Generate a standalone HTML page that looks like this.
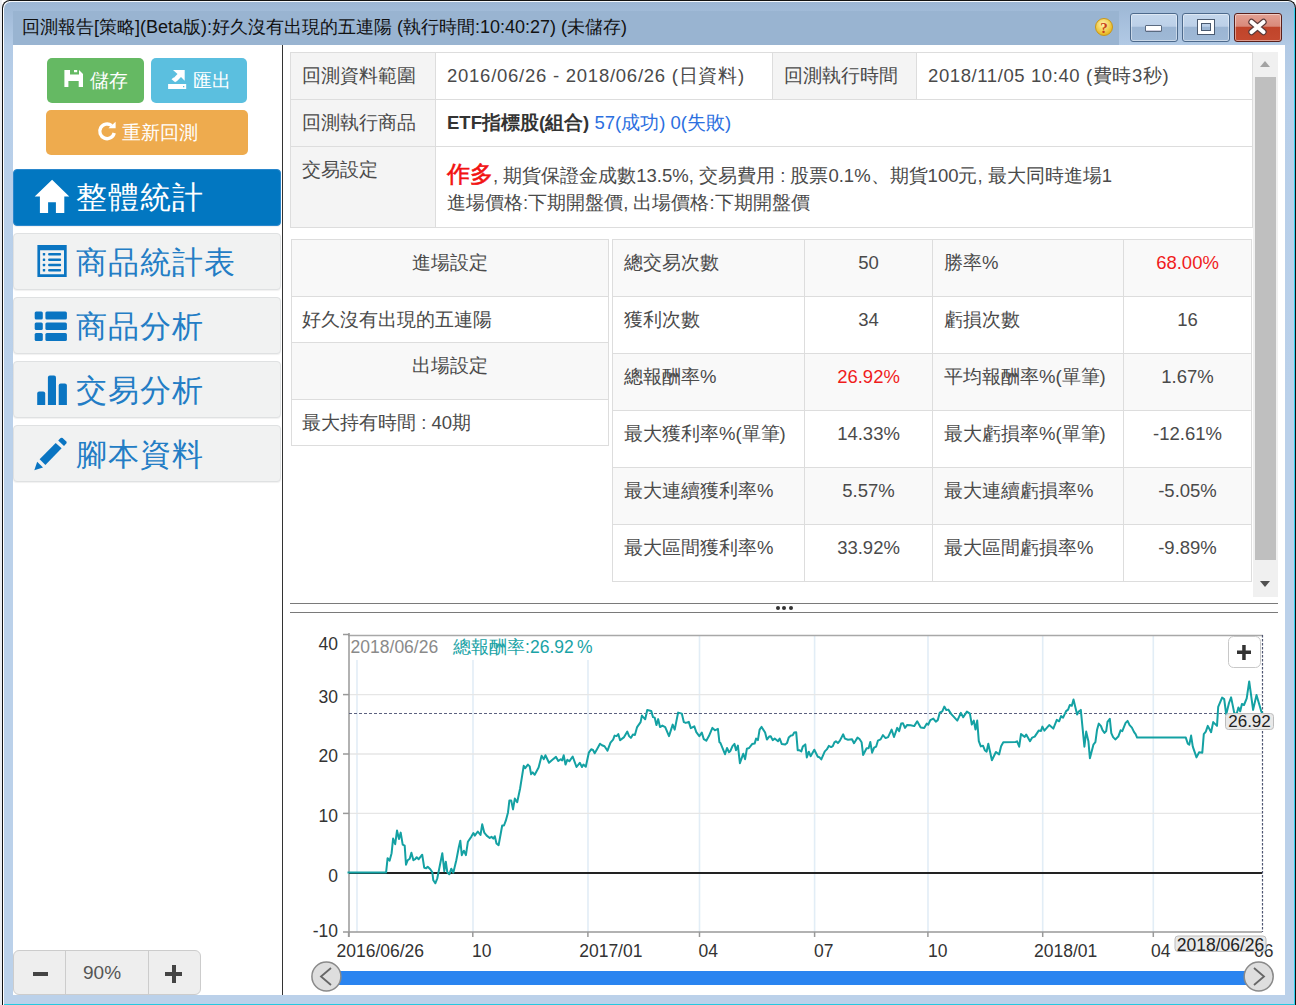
<!DOCTYPE html>
<html><head><meta charset="utf-8">
<style>
*{margin:0;padding:0;box-sizing:border-box}
html,body{width:1296px;height:1005px;overflow:hidden;background:#fff;font-family:"Liberation Sans",sans-serif;color:#333}
.a{position:absolute}
#frame{left:2px;top:0;width:1294px;height:1005px;background:linear-gradient(#9cb6d4 0px,#a6bfdc 20px,#b2cae5 45px,#b8cfe9 90px,#bbd1ea 400px);border-radius:8px 8px 0 0;border:1px solid #111;border-bottom:none;box-shadow:inset 1px 1px 0 #f6f9fc}
#outline{left:2px;top:0;width:1294px;height:1005px;border:1px solid #222;border-bottom:none;border-radius:8px 8px 0 0}
#tband{left:13px;top:11px;width:1106px;height:34px;background:#99b4d1}
#title{left:22px;top:15px;font-size:18px;line-height:24px;color:#111;white-space:nowrap}
#content{left:13px;top:45px;width:1272px;height:950px;background:#fff}
.cbtn{top:13px;height:29px;border:1px solid #4d6a8c;border-radius:3px;background:linear-gradient(#c4d7ec 0,#bcd0e8 45%,#9bb5d3 50%,#9fb9d6 100%);box-shadow:inset 0 0 0 1px rgba(255,255,255,.45)}
#bclose{background:linear-gradient(#e3a194 0,#d98a7a 45%,#c0442a 50%,#c54a30 100%);border-color:#5a1f1a}
.btn{border-radius:5px;color:#fff;font-size:19px;line-height:45px;text-align:center;white-space:nowrap}
.nav{left:13px;width:268px;height:57px;border-radius:4px;background:#f1f2f2;border:1px solid #dfe1e2;box-shadow:0 1px 1px rgba(0,0,0,.06)}
.navt{font-size:31px;line-height:57px;color:#237dc5;white-space:nowrap;letter-spacing:1.1px}
.tx2{font-size:19px;line-height:27px;color:#fff;white-space:nowrap}
.nav svg{position:absolute}
.tx{font-size:18.5px;line-height:24px;color:#4a4a4a;white-space:nowrap}
</style></head><body>
<div class="a" style="left:0;top:0;width:2px;height:1005px;background:#eceef2"></div>
<div id="frame" class="a"></div>
<div class="a" style="left:2px;top:8px;width:1px;height:997px;background:#111"></div>
<div class="a" style="left:3px;top:8px;width:1px;height:997px;background:#fff"></div>
<div class="a" style="left:9px;top:0;width:1278px;height:1px;background:#111"></div>
<div class="a" style="left:9px;top:1px;width:1278px;height:1px;background:#f4f8fc"></div>
<div class="a" style="left:1295px;top:8px;width:1px;height:997px;background:#111"></div>
<div class="a" style="left:1294px;top:8px;width:1px;height:997px;background:#30d0ee"></div>
<div class="a" style="left:4px;top:1004px;width:1290px;height:1px;background:#25c9e0"></div>
<div id="tband" class="a"></div>
<div id="title" class="a">回測報告[策略](Beta版):好久沒有出現的五連陽 (執行時間:10:40:27) (未儲存)</div>
<!-- help icon -->
<svg class="a" style="left:1094px;top:17px" width="20" height="20" viewBox="0 0 20 20"><defs><radialGradient id="hg" cx="45%" cy="35%" r="65%"><stop offset="0" stop-color="#fff6b0"/><stop offset="1" stop-color="#e8b416"/></radialGradient></defs><circle cx="10" cy="10" r="8.5" fill="url(#hg)" stroke="#c8961a" stroke-width="1"/><text x="10" y="15.5" font-size="15" font-weight="bold" font-family="Liberation Serif" text-anchor="middle" fill="#c8401a">?</text></svg>
<div class="a cbtn" style="left:1130px;width:48px"></div>
<div class="a" style="left:1145px;top:25px;width:17px;height:7px;background:#fff;border:1px solid #5a6a80;border-radius:1px;box-shadow:inset 0 -1px 0 #ccd"></div>
<div class="a cbtn" style="left:1182px;width:48px"></div>
<div class="a" style="left:1198px;top:20px;width:16px;height:14px;border:3px solid #fff;outline:1px solid #4a5a70;box-shadow:inset 0 0 0 1px #4a5a70"></div>
<div class="a cbtn" id="bclose" style="left:1234px;width:48px"></div>
<svg class="a" style="left:1246px;top:17px" width="24" height="20" viewBox="0 0 24 20"><path d="M5.5 5 L17.5 15 M17.5 5 L5.5 15" stroke="#5a3a3a" stroke-width="6.4" stroke-linecap="round"/><path d="M5.5 5 L17.5 15 M17.5 5 L5.5 15" stroke="#fff" stroke-width="4.2" stroke-linecap="round"/></svg>

<div id="content" class="a"></div>
<!-- left panel divider -->
<div class="a" style="left:282px;top:45px;width:1px;height:950px;background:#333"></div>

<!-- buttons -->
<div class="a btn" style="left:47px;top:58px;width:97px;height:45px;background:#65b963"></div>
<div class="a btn" style="left:151px;top:58px;width:96px;height:45px;background:#5bbfdf"></div>
<div class="a btn" style="left:46px;top:110px;width:202px;height:45px;background:#eeab4e"></div>
<div class="a tx2" style="left:90px;top:67px">儲存</div>
<div class="a tx2" style="left:193px;top:67px">匯出</div>
<div class="a tx2" style="left:122px;top:119px">重新回測</div>
<svg class="a" style="left:0;top:0" width="283" height="500" viewBox="0 0 283 500">
<path d="M64.4 70 H79 L83 74 V87 H78.7 V81 H68.4 V87 H64.4 Z M70 70 V74.5 H79 V70 H77.2 V72.3 H74 V70 Z" fill="#fff" fill-rule="evenodd"/>
<path d="M173 70 H184.7 V80.8 L181 77 L176.6 81.6 L173.2 78.6 L177.5 74 Z" fill="#fff"/>
<path d="M171.5 79.2 L173.5 77.6 L177 80.6 L175.2 82.2 Z" fill="#fff"/>
<path d="M168.1 84 H186.2 V88.9 H168.1 Z M183 85.9 H184.3 V87.2 H183 Z" fill="#fff" fill-rule="evenodd"/>
<path d="M114.2 133 A7.3 7.3 0 1 1 111.6 125.6" fill="none" stroke="#fff" stroke-width="3.4"/>
<path d="M115.6 121.8 V128.3 H108.4 Z" fill="#fff"/>
</svg>

<!-- nav -->
<div class="a nav" style="top:169px;background:#0277c1;border-color:#2a87cc;height:57px"></div>
<div class="a navt" style="left:76px;top:169px;color:#fff">整體統計</div>
<div class="a nav" style="top:233px"></div>
<div class="a navt" style="left:76px;top:234px">商品統計表</div>
<div class="a nav" style="top:297px"></div>
<div class="a navt" style="left:76px;top:298px">商品分析</div>
<div class="a nav" style="top:361px"></div>
<div class="a navt" style="left:76px;top:362px">交易分析</div>
<div class="a nav" style="top:425px"></div>
<div class="a navt" style="left:76px;top:426px">腳本資料</div>
<svg class="a" style="left:0;top:0" width="283" height="500" viewBox="0 0 283 500">
<path d="M52.1 179.7 L69.3 196.6 H64.3 V213 H55.9 V202.3 H48.1 V213 H39.9 V196.6 H34.7 Z" fill="#fff"/>
<g fill="#0a75c2">
<path d="M37.4 244.9 H66.7 V276.9 H37.4 Z M40.1 250.2 V274.3 H64 V250.2 Z" fill-rule="evenodd"/>
<rect x="42.8" y="253" width="2.4" height="2.5" rx=".5"/><rect x="48.1" y="253" width="13" height="2.5" rx="1"/>
<rect x="42.8" y="258.4" width="2.4" height="2.5" rx=".5"/><rect x="48.1" y="258.4" width="13" height="2.5" rx="1"/>
<rect x="42.8" y="263.7" width="2.4" height="2.5" rx=".5"/><rect x="48.1" y="263.7" width="13" height="2.5" rx="1"/>
<rect x="42.8" y="269" width="2.4" height="2.5" rx=".5"/><rect x="48.1" y="269" width="13" height="2.5" rx="1"/>
<rect x="34.7" y="311.6" width="8.1" height="8" rx="1.5"/><rect x="45.4" y="311.6" width="21.5" height="8" rx="1.5"/>
<rect x="34.7" y="322.4" width="8.1" height="7.7" rx="1.5"/><rect x="45.4" y="322.4" width="21.5" height="7.7" rx="1.5"/>
<rect x="34.7" y="333" width="8.1" height="8" rx="1.5"/><rect x="45.4" y="333" width="21.5" height="8" rx="1.5"/>
<path d="M37.2 404.9 V393.5 Q37.2 391.5 39.2 391.5 H43.2 Q45.2 391.5 45.2 393.5 V404.9 Z"/>
<path d="M47.9 404.9 V377.6 Q47.9 375.6 49.9 375.6 H54 Q56 375.6 56 377.6 V404.9 Z"/>
<path d="M58.7 404.9 V385.4 Q58.7 383.4 60.7 383.4 H64.9 Q66.9 383.4 66.9 385.4 V404.9 Z"/>
<path d="M34.3 470.3 L37.2 461.8 L43 467.6 Z"/>
<path d="M39.6 459.3 L55.7 443 L61.6 448.3 L45.4 464.9 Z"/>
<path d="M58.2 440.5 L60.6 438.1 Q61.6 437.3 62.6 438.1 L66.3 441.5 Q67.1 442.5 66.3 443.4 L64 445.9 Z"/>
</g>
</svg>

<!-- zoom control -->
<div class="a" style="left:13px;top:950px;width:188px;height:45px;background:#eee;border:1px solid #ccc;border-radius:6px"></div>
<div class="a" style="left:65px;top:951px;width:1px;height:44px;background:#ccc"></div>
<div class="a" style="left:148px;top:951px;width:1px;height:44px;background:#ccc"></div>
<div class="a" style="left:33px;top:972px;width:15px;height:4px;background:#444"></div>
<div class="a" style="left:83px;top:951px;line-height:44px;font-size:19px;color:#555">90%</div>
<div class="a" style="left:165px;top:972px;width:17px;height:4px;background:#444"></div>
<div class="a" style="left:172px;top:965px;width:4px;height:18px;background:#444"></div>

<!-- top table -->
<div class="a" style="left:290px;top:52px;width:963px;height:176px;border:1px solid #ddd;background:#fff"></div>
<div class="a" style="left:291px;top:53px;width:144px;height:174px;background:#f4f4f4"></div>
<div class="a" style="left:773px;top:53px;width:143px;height:46px;background:#f4f4f4"></div>
<div class="a" style="left:291px;top:99px;width:961px;height:1px;background:#ddd"></div>
<div class="a" style="left:291px;top:146px;width:961px;height:1px;background:#ddd"></div>
<div class="a" style="left:435px;top:53px;width:1px;height:174px;background:#ddd"></div>
<div class="a" style="left:772px;top:53px;width:1px;height:46px;background:#ddd"></div>
<div class="a" style="left:916px;top:53px;width:1px;height:46px;background:#ddd"></div>
<div class="a tx" style="left:302px;top:64px">回測資料範圍</div>
<div class="a tx" style="left:447px;top:64px;letter-spacing:.75px">2016/06/26 - 2018/06/26 (日資料)</div>
<div class="a tx" style="left:784px;top:64px">回測執行時間</div>
<div class="a tx" style="left:928px;top:64px;letter-spacing:.6px">2018/11/05 10:40 (費時3秒)</div>
<div class="a tx" style="left:302px;top:111px">回測執行商品</div>
<div class="a tx" style="left:447px;top:111px"><b style="color:#333">ETF指標股(組合)</b> <span style="color:#2b6fe0">57(成功) 0(失敗)</span></div>
<div class="a tx" style="left:302px;top:158px">交易設定</div>
<div class="a tx" style="left:447px;top:163px;white-space:nowrap"><b style="color:#f21212;font-size:22.5px;font-weight:normal;-webkit-text-stroke:0.6px #f21212">作多</b>, 期貨保證金成數13.5%, 交易費用 : 股票0.1%、期貨100元, 最大同時進場1</div>
<div class="a tx" style="left:447px;top:191px">進場價格:下期開盤價, 出場價格:下期開盤價</div>

<!-- entry/exit table -->
<div class="a" style="left:291px;top:239px;width:318px;height:207px;border:1px solid #ddd;background:#fff"></div>
<div class="a" style="left:292px;top:240px;width:316px;height:56px;background:#f8f8f8"></div>
<div class="a" style="left:292px;top:343px;width:316px;height:56px;background:#f8f8f8"></div>
<div class="a" style="left:292px;top:296px;width:316px;height:1px;background:#ddd"></div>
<div class="a" style="left:292px;top:342px;width:316px;height:1px;background:#ddd"></div>
<div class="a" style="left:292px;top:399px;width:316px;height:1px;background:#ddd"></div>
<div class="a tx" style="left:292px;top:251px;width:316px;text-align:center">進場設定</div>
<div class="a tx" style="left:302px;top:308px">好久沒有出現的五連陽</div>
<div class="a tx" style="left:292px;top:354px;width:316px;text-align:center">出場設定</div>
<div class="a tx" style="left:302px;top:411px">最大持有時間 : 40期</div>

<!-- stats table -->
<div class="a" style="left:612px;top:239px;width:640px;height:343px;border:1px solid #ddd;background:#fff"></div>
<div class="a" style="left:613px;top:240px;width:638px;height:56px;background:#f9f9f9"></div>
<div class="a" style="left:613px;top:354px;width:638px;height:56px;background:#f9f9f9"></div>
<div class="a" style="left:613px;top:468px;width:638px;height:56px;background:#f9f9f9"></div>
<div class="a" style="left:613px;top:296px;width:638px;height:1px;background:#ddd"></div>
<div class="a" style="left:613px;top:353px;width:638px;height:1px;background:#ddd"></div>
<div class="a" style="left:613px;top:410px;width:638px;height:1px;background:#ddd"></div>
<div class="a" style="left:613px;top:467px;width:638px;height:1px;background:#ddd"></div>
<div class="a" style="left:613px;top:524px;width:638px;height:1px;background:#ddd"></div>
<div class="a" style="left:804px;top:240px;width:1px;height:341px;background:#ddd"></div>
<div class="a" style="left:932px;top:240px;width:1px;height:341px;background:#ddd"></div>
<div class="a" style="left:1123px;top:240px;width:1px;height:341px;background:#ddd"></div>
<div class="a tx" style="left:624px;top:251px">總交易次數</div>
<div class="a tx" style="left:805px;top:251px;width:127px;text-align:center">50</div>
<div class="a tx" style="left:944px;top:251px">勝率%</div>
<div class="a tx" style="left:1124px;top:251px;width:127px;text-align:center;color:#f01c1c">68.00%</div>
<div class="a tx" style="left:624px;top:308px">獲利次數</div>
<div class="a tx" style="left:805px;top:308px;width:127px;text-align:center">34</div>
<div class="a tx" style="left:944px;top:308px">虧損次數</div>
<div class="a tx" style="left:1124px;top:308px;width:127px;text-align:center">16</div>
<div class="a tx" style="left:624px;top:365px">總報酬率%</div>
<div class="a tx" style="left:805px;top:365px;width:127px;text-align:center;color:#f01c1c">26.92%</div>
<div class="a tx" style="left:944px;top:365px">平均報酬率%(單筆)</div>
<div class="a tx" style="left:1124px;top:365px;width:127px;text-align:center">1.67%</div>
<div class="a tx" style="left:624px;top:422px">最大獲利率%(單筆)</div>
<div class="a tx" style="left:805px;top:422px;width:127px;text-align:center">14.33%</div>
<div class="a tx" style="left:944px;top:422px">最大虧損率%(單筆)</div>
<div class="a tx" style="left:1124px;top:422px;width:127px;text-align:center">-12.61%</div>
<div class="a tx" style="left:624px;top:479px">最大連續獲利率%</div>
<div class="a tx" style="left:805px;top:479px;width:127px;text-align:center">5.57%</div>
<div class="a tx" style="left:944px;top:479px">最大連續虧損率%</div>
<div class="a tx" style="left:1124px;top:479px;width:127px;text-align:center">-5.05%</div>
<div class="a tx" style="left:624px;top:536px">最大區間獲利率%</div>
<div class="a tx" style="left:805px;top:536px;width:127px;text-align:center">33.92%</div>
<div class="a tx" style="left:944px;top:536px">最大區間虧損率%</div>
<div class="a tx" style="left:1124px;top:536px;width:127px;text-align:center">-9.89%</div>

<!-- scrollbar -->
<div class="a" style="left:1253px;top:52px;width:25px;height:545px;background:#f0f0f0"></div>
<div class="a" style="left:1255px;top:77px;width:21px;height:483px;background:#bfbfbf"></div>
<div class="a" style="left:1260px;top:61px;width:0;height:0;border-left:5.5px solid transparent;border-right:5.5px solid transparent;border-bottom:6px solid #a3a3a3"></div>
<div class="a" style="left:1260px;top:581px;width:0;height:0;border-left:5.5px solid transparent;border-right:5.5px solid transparent;border-top:6px solid #505050"></div>

<!-- splitter -->
<div class="a" style="left:290px;top:603px;width:988px;height:1px;background:#7a7a7a"></div>
<div class="a" style="left:290px;top:612px;width:988px;height:1px;background:#7a7a7a"></div>
<div class="a" style="left:776px;top:606px;width:4px;height:4px;border-radius:50%;background:#333"></div>
<div class="a" style="left:782px;top:606px;width:4px;height:4px;border-radius:50%;background:#333"></div>
<div class="a" style="left:789px;top:606px;width:4px;height:4px;border-radius:50%;background:#333"></div>

<!--CHARTSTART--><svg class="a" style="left:0;top:0" width="1296" height="1005" viewBox="0 0 1296 1005">
<line x1="357" y1="635" x2="357" y2="932" stroke="#e2edf6" stroke-width="1.6"/>
<line x1="473" y1="635" x2="473" y2="932" stroke="#e2edf6" stroke-width="1.6"/>
<line x1="588" y1="635" x2="588" y2="932" stroke="#e2edf6" stroke-width="1.6"/>
<line x1="699.5" y1="635" x2="699.5" y2="932" stroke="#e2edf6" stroke-width="1.6"/>
<line x1="814.6" y1="635" x2="814.6" y2="932" stroke="#e2edf6" stroke-width="1.6"/>
<line x1="928" y1="635" x2="928" y2="932" stroke="#e2edf6" stroke-width="1.6"/>
<line x1="1042.7" y1="635" x2="1042.7" y2="932" stroke="#e2edf6" stroke-width="1.6"/>
<line x1="1153.3" y1="635" x2="1153.3" y2="932" stroke="#e2edf6" stroke-width="1.6"/>
<line x1="349" y1="694.6" x2="1262" y2="694.6" stroke="#e6e6e6" stroke-width="1.3"/>
<line x1="349" y1="754.0" x2="1262" y2="754.0" stroke="#e6e6e6" stroke-width="1.3"/>
<line x1="349" y1="813.4" x2="1262" y2="813.4" stroke="#e6e6e6" stroke-width="1.3"/>
<rect x="350" y="636" width="248" height="24" fill="#fff"/>
<line x1="348" y1="635.5" x2="1263" y2="635.5" stroke="#a8a8a8" stroke-width="1.5"/>
<line x1="349" y1="633" x2="349" y2="937" stroke="#999" stroke-width="1.5"/>
<line x1="343" y1="932" x2="1262" y2="932" stroke="#999" stroke-width="1.5"/>
<line x1="343" y1="634.5" x2="349" y2="634.5" stroke="#999" stroke-width="1.5"/>
<line x1="343" y1="694.6" x2="349" y2="694.6" stroke="#999" stroke-width="1.5"/>
<line x1="343" y1="754.0" x2="349" y2="754.0" stroke="#999" stroke-width="1.5"/>
<line x1="343" y1="813.4" x2="349" y2="813.4" stroke="#999" stroke-width="1.5"/>
<line x1="348.6" y1="932" x2="348.6" y2="937" stroke="#999" stroke-width="1.5"/>
<line x1="472.8" y1="932" x2="472.8" y2="937" stroke="#999" stroke-width="1.5"/>
<line x1="587.9" y1="932" x2="587.9" y2="937" stroke="#999" stroke-width="1.5"/>
<line x1="699.5" y1="932" x2="699.5" y2="937" stroke="#999" stroke-width="1.5"/>
<line x1="814.6" y1="932" x2="814.6" y2="937" stroke="#999" stroke-width="1.5"/>
<line x1="927.9" y1="932" x2="927.9" y2="937" stroke="#999" stroke-width="1.5"/>
<line x1="1042.7" y1="932" x2="1042.7" y2="937" stroke="#999" stroke-width="1.5"/>
<line x1="1153.3" y1="932" x2="1153.3" y2="937" stroke="#999" stroke-width="1.5"/>
<line x1="349" y1="873" x2="1262" y2="873" stroke="#222" stroke-width="2"/>
<line x1="349" y1="713.5" x2="1262" y2="713.5" stroke="#5c6280" stroke-width="1" stroke-dasharray="3,2"/>
<line x1="1262.5" y1="635" x2="1262.5" y2="932" stroke="#4f5672" stroke-width="1.2" stroke-dasharray="2.5,1.5"/>
<polyline points="347.5,872.4 386.1,872.4 387.6,858.2 389.6,860.7 391.6,853.2 393.1,838.6 395.2,844.2 397,830.6 399,839.1 400.7,832.6 402.7,844.7 404.7,845.7 406,864.7 407.7,860.2 409.7,858.7 411.4,852.7 413.4,860.2 415.2,859.2 416.7,857.2 418.7,859.2 422.2,854.7 424.2,867.7 426.2,868.2 427.7,866.7 430.3,869.2 432.3,872.2 433.3,880.3 435.3,883.3 437.3,878.3 442.3,853.2 444.3,871.2 445.8,861.7 447.3,872.2 449.3,874.3 451.3,868.7 453.3,872.7 456.3,860.2 458.8,847.2 460.3,840.7 461.8,855.2 463.9,850.7 465.9,855.2 467.9,841.7 471.4,836.6 473.4,833.1 474.8,835.6 477.8,831.5 480.5,835 482.2,824.3 484.3,832.7 486.7,835.6 489.7,838 491.5,836.8 493.3,838.6 494.8,836.2 496.5,843.4 498.6,845.2 502.2,825.5 504,825.5 505.8,820.7 508,812.4 509.4,800.4 511.2,800.4 513,809.4 514.8,798.6 517.2,802.2 520.1,788.5 523.7,765.8 525.2,768.2 527.9,764.6 529.7,766.4 531.1,774.2 532.7,772.4 534.7,774.8 538.6,767.6 541.6,755.7 543.8,759.2 545.4,755.3 549,762.8 552.4,759.8 556,756.9 558.3,761 560.7,759.2 562.2,760.4 563.7,755.3 565.5,764.6 567.3,759.8 569.3,761.3 572.7,756.5 576.5,767 579.8,762.8 582,767 583.4,764.6 585.8,766.8 588.8,752.7 591.2,749.3 593,750 594.7,753.3 597,749.2 600,743.7 602,745.2 604.5,746.2 607.5,750.7 610.5,742.7 613.1,739.7 614.6,735.6 616.6,736.1 618.3,734.1 620.1,740.2 624.1,737.1 627.3,731.6 629.1,736.1 630.9,737.9 632.9,734.6 634.9,734.9 637.1,727.1 640.6,722.1 641.9,715.6 645.2,719.3 647.2,710.1 651.2,710.9 653,717.1 654.7,717.6 656.4,725.1 658.2,719.1 660,727.1 662.4,725.6 665.2,727.1 669,736.1 672.7,724.6 674.7,729.6 678.1,712.6 681.8,713.6 683.8,722.1 685.8,722.9 688.8,721.9 690.8,728.1 694.3,726.3 696.3,732.1 699.3,736.1 701.8,732.6 703.8,739.2 706.3,740.7 708.9,736.1 712.4,727.9 714.9,730.3 717.9,728.9 719.4,742.2 720.5,743.1 725,754.2 727,748 729,752.2 730.5,750.7 732.5,746.1 734.5,743.9 736,750.2 737.9,745.6 739.9,763.2 743.3,753.7 745.1,759.2 746.9,748.7 749.1,748 752.1,744.1 754.6,743.6 756.1,738.6 757.9,740.1 759.6,729.6 761.6,726.9 765.1,732.6 766.9,739.6 769.2,736.6 770.7,736.3 772.7,740.1 774.7,738.6 778,741.3 779.7,738.6 781.7,743.9 785.2,744.6 787,743.1 788.7,737.6 791,735.6 792.7,735.3 794.2,732.6 796.2,732.3 797.7,750.2 799.2,750.2 801.3,751.4 802.8,746.6 805.3,744.4 806.8,757.4 808.8,751.7 810.6,756.2 814.3,749.7 817.8,756.7 819.3,757.2 821.3,759.4 824.8,751.4 826.8,749.4 828.8,745.9 831.1,747.1 832.8,746.1 834.4,742.3 835.9,741.3 837.9,743.1 839.9,740.6 843.2,734.3 844.9,738.6 848,739.7 852,739.2 854,743.2 857.5,737.6 859.5,739 861.6,742.2 863.1,755 866.6,748.2 868.6,748.2 870.3,742 872.1,752.7 874.1,747.7 876.1,746.7 877.9,740.7 880.6,739.4 882.9,735.1 885.6,738.1 888.1,737.1 891.6,729.6 894,737 897.2,727.9 899.2,731.1 901.2,723.6 903,723.3 905,727.9 907.2,724.9 910.7,725.3 914.2,726.1 917.2,721.3 920.7,727.6 924.2,727.9 926.8,723.6 928.3,724.6 930.3,720.1 933.3,718.6 935.8,721.6 937.8,720.1 939.8,712.6 942.3,711.3 944.3,706.6 946.3,710.1 948.3,709.6 951.3,714.1 957.3,720.6 960.9,712.9 963.2,717.3 966.9,711.6 969.9,713.6 971.8,724.6 973.8,720.6 975.5,729.6 977.2,720.6 978.8,741.2 980.8,746.4 983,745.7 984.8,750.2 986.6,751.7 988.3,743.7 991.9,760.2 995.9,752 999.1,754.4 1001.1,746.2 1003.3,742.2 1015.6,742 1017.1,741.4 1019.2,746.7 1021,734.1 1024.7,736.9 1026.2,734.6 1030,741.2 1032.2,737.6 1034.7,736.6 1038.7,730.6 1041,730.9 1042.4,726.6 1044.4,730.6 1049.2,725.1 1053.3,728.6 1056.8,719.9 1059.1,721.3 1061.1,716.1 1063.1,717.6 1066.1,711.1 1068.1,709.6 1069.8,705 1071.8,705.8 1073.5,699.5 1077.1,714.6 1078.8,711.6 1080.8,709.9 1084.4,746.7 1086.2,731.6 1088.4,741.2 1089.9,758.2 1093.4,744.7 1095.4,742.2 1097,730.1 1098.8,723.6 1101,726.1 1102.5,730.1 1104.5,732.9 1106.2,731.1 1107.5,721.9 1109.8,718.9 1111.3,733.1 1113.1,737.1 1115.3,739.4 1118.3,736.6 1120.6,730.3 1122.3,731.1 1125.6,722.9 1127.6,720.9 1129.6,725.1 1131.9,727.6 1134.1,732.1 1135.6,734.1 1137.1,737.6 1185.8,737.6 1187.8,743.7 1189.3,744.7 1191.1,735.6 1192.8,746.7 1196.5,757.4 1199.1,752.2 1202.3,752.7 1203.8,734.1 1205.8,731.6 1207.8,725.9 1211.1,732.2 1213.2,722.1 1217,725.9 1218.2,706.8 1222.1,697.6 1224.2,699.1 1226.2,714.5 1229,703 1231.1,697.4 1234.3,713.1 1236.7,713.8 1238.4,707.5 1240.2,711.3 1241.9,704 1244,705 1246.7,698.4 1249.2,681.4 1253.1,709.9 1256.5,695 1261.4,711.7 1262.5,713.1" fill="none" stroke="#14a1a3" stroke-width="2" stroke-linejoin="round"/>
<text x="338" y="650" text-anchor="end" font-family="Liberation Sans" font-size="17.5" fill="#333">40</text>
<text x="338" y="702.7" text-anchor="end" font-family="Liberation Sans" font-size="17.5" fill="#333">30</text>
<text x="338" y="762.4" text-anchor="end" font-family="Liberation Sans" font-size="17.5" fill="#333">20</text>
<text x="338" y="822.4" text-anchor="end" font-family="Liberation Sans" font-size="17.5" fill="#333">10</text>
<text x="338" y="881.5" text-anchor="end" font-family="Liberation Sans" font-size="17.5" fill="#333">0</text>
<text x="338" y="937" text-anchor="end" font-family="Liberation Sans" font-size="17.5" fill="#333">-10</text>
<text x="336.5" y="956.8" font-family="Liberation Sans" font-size="17.5" fill="#333">2016/06/26</text>
<text x="472" y="956.8" font-family="Liberation Sans" font-size="17.5" fill="#333">10</text>
<text x="579.2" y="956.8" font-family="Liberation Sans" font-size="17.5" fill="#333">2017/01</text>
<text x="698.5" y="956.8" font-family="Liberation Sans" font-size="17.5" fill="#333">04</text>
<text x="814" y="956.8" font-family="Liberation Sans" font-size="17.5" fill="#333">07</text>
<text x="928" y="956.8" font-family="Liberation Sans" font-size="17.5" fill="#333">10</text>
<text x="1034" y="956.8" font-family="Liberation Sans" font-size="17.5" fill="#333">2018/01</text>
<text x="1151" y="956.8" font-family="Liberation Sans" font-size="17.5" fill="#333">04</text>
<text x="1254" y="956.8" font-family="Liberation Sans" font-size="17.5" fill="#333">06</text>
<text x="350.6" y="653.3" font-family="Liberation Sans" font-size="17.5" fill="#8a8a8a">2018/06/26</text>
<text x="453" y="653.3" font-family="Liberation Sans" font-size="17.5" fill="#1aa3a6">總報酬率:<tspan x="530">26.92</tspan><tspan x="577">%</tspan></text>
<rect x="1228.5" y="636.5" width="32" height="31" rx="5" fill="#fff" stroke="#c8c8c8" stroke-width="1"/>
<rect x="1237" y="650.5" width="14" height="3.5" fill="#333"/>
<rect x="1242.2" y="645" width="3.5" height="15" fill="#333"/>
<rect x="1225.5" y="713.5" width="48" height="16" rx="3" fill="#e9e9e9" stroke="#bdbdbd" stroke-width="1"/>
<text x="1249.5" y="727" text-anchor="middle" font-family="Liberation Sans" font-size="17" fill="#222">26.92</text>
<rect x="1175" y="936" width="91" height="15.5" rx="3" fill="#e9e9e9" stroke="#bdbdbd" stroke-width="1"/>
<text x="1220.5" y="950.5" text-anchor="middle" font-family="Liberation Sans" font-size="17.5" fill="#222">2018/06/26</text>
<rect x="326" y="971" width="933" height="14" fill="#2a84f0"/>
<circle cx="326.4" cy="976.5" r="14.5" fill="#dedede" stroke="#8a8a8a" stroke-width="1.5"/>
<path d="M331 968 L321 976.5 L331 985" fill="none" stroke="#666" stroke-width="1.8"/>
<circle cx="1258.7" cy="976.5" r="14.5" fill="#dedede" stroke="#8a8a8a" stroke-width="1.5"/>
<path d="M1254 968 L1264 976.5 L1254 985" fill="none" stroke="#666" stroke-width="1.8"/>
</svg><!--CHARTEND-->
</body></html>
